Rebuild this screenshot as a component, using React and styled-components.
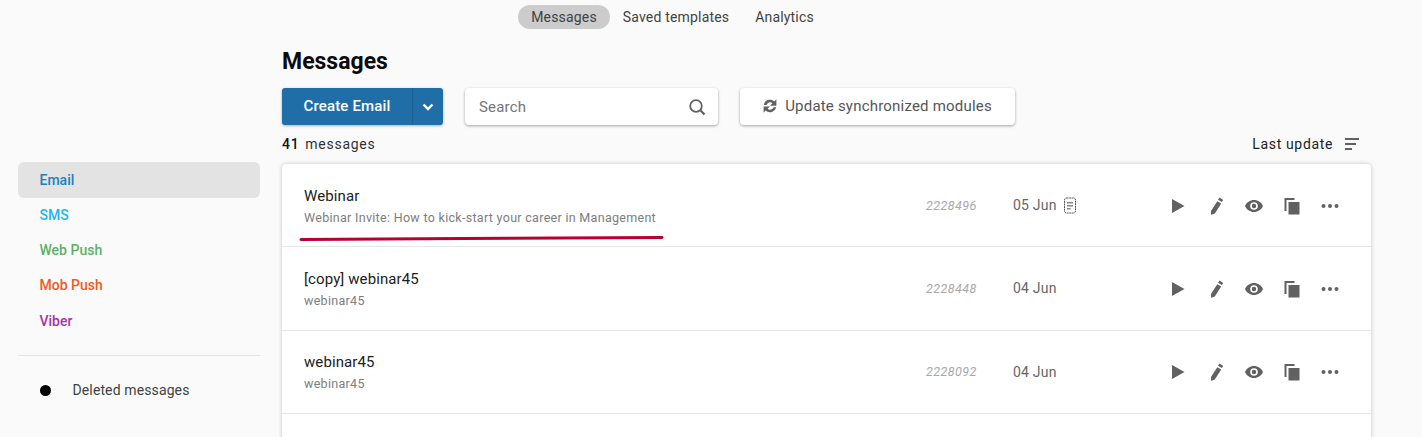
import React from "react";
import styled, { createGlobalStyle } from "styled-components";

const Global = createGlobalStyle`
  html, body { margin: 0; padding: 0; height: 437px; overflow: hidden; background: #fafafa; }
  body { font-family: Roboto, "Liberation Sans", sans-serif; }
`;
const Page = styled.div`
  width: 1422px; height: 437px; overflow: hidden; background: #fafafa;
`;
const Tabs = styled.nav`
  display: flex; justify-content: center; height: 29px; padding: 5px 77px 0 0; box-sizing: border-box;
`;
const Tab = styled.div`
  height: 24px; line-height: 24px; font-size: 14px; letter-spacing: 0.18px; color: #424242;
  padding: 0 13px; border-radius: 12px; background: ${p => (p.$active ? "#cccccc" : "transparent")};
`;
const Body = styled.div`
  display: flex; padding-left: 18px;
`;
const Sidebar = styled.aside`
  width: 242px; flex: none; padding-top: 133px; margin-right: 22px;
`;
const SideItem = styled.div`
  height: 36px; line-height: 36px; margin-bottom: -0.85px; padding-left: 21.5px; border-radius: 6px; font-size: 14px; font-weight: 500;
  color: ${p => p.$color}; background: ${p => (p.$active ? "#e3e3e3" : "transparent")};
`;
const SideDivider = styled.div`
  height: 1px; background: #e4e4e4; margin-top: 17.5px;
`;
const Deleted = styled.div`
  display: flex; align-items: center; height: 68px; padding-left: 21.5px; font-size: 14px; letter-spacing: 0.12px; color: #424242;
`;
const Dot = styled.span`
  width: 11px; height: 11px; border-radius: 50%; background: #000; margin-right: 22px; flex: none;
`;
const Main = styled.main`
  width: 1089px; flex: none; position: relative;
`;
const Title = styled.h1`
  margin: 0; padding-top: 18px; height: 59px; box-sizing: border-box; font-size: 23px; line-height: 29px; font-weight: 700; color: #0c0c0c;
`;
const Toolbar = styled.div`
  display: flex; align-items: center; height: 37px;
`;
const SplitButton = styled.div`
  display: flex; height: 37px; width: 161px; border-radius: 3px; background: #1f6ea8; color: #fff;
  box-shadow: 0 1px 3px rgba(0,0,0,.3); margin-right: 22px; overflow: hidden; flex: none;
`;
const MainAction = styled.div`
  width: 130px; flex: none; text-align: center; line-height: 37px; font-size: 15px; letter-spacing: .15px; font-weight: 500; border-right: 1px solid #1a6296;
`;
const Caret = styled.div`
  flex: 1; display: flex; align-items: center; justify-content: center;
`;
const SearchBox = styled.div`
  width: 253px; height: 37px; box-sizing: border-box; flex: none; background: #fff; border-radius: 4px; margin-right: 22px;
  box-shadow: 0 1px 3px rgba(0,0,0,.35); display: flex; align-items: center; justify-content: space-between;
  padding: 0 12px 0 14px; font-size: 15px; letter-spacing: 0.2px; color: #757575;
`;
const SyncButton = styled.div`
  width: 275px; height: 37px; box-sizing: border-box; background: #fff; border-radius: 4px; flex: none;
  box-shadow: 0 1px 3px rgba(0,0,0,.35); display: flex; align-items: center; justify-content: center; gap: 6px;
  padding: 0 2px 2px 0; font-size: 15px; letter-spacing: 0.2px; color: #555;
`;
const Meta = styled.div`
  display: flex; align-items: center; justify-content: space-between; height: 37px; margin-bottom: 2px; padding-right: 12px;
  font-size: 14px; letter-spacing: 0.72px; color: #333;
`;
const Count = styled.div`
  display: flex; gap: 6px;
  & > b { font-weight: 500; color: #111; }
`;
const Sort = styled.div`
  display: flex; align-items: center; gap: 12px; color: #222; letter-spacing: 0.65px;
`;
const Card = styled.section`
  background: #fff; border-radius: 4px 4px 0 0; box-shadow: 0 0 4px rgba(0,0,0,.22); height: 300px;
`;
const Row = styled.article`
  display: flex; align-items: center; height: 83.33px; box-sizing: border-box; border-bottom: 1px solid #e6e6e6;
  padding-left: 22px; position: relative;
`;
const Names = styled.div`
  width: 622px; flex: none; padding-top: 2px;
`;
const Name = styled.div`
  font-size: 15px; line-height: 18px; color: #212121; margin-bottom: 5px; letter-spacing: 0.1px;
`;
const Subject = styled.div`
  font-size: 12.5px; line-height: 16px; color: #7d7d7d; letter-spacing: 0.3px;
`;
const Id = styled.div`
  width: 87px; flex: none; font-size: 12.5px; font-style: italic; color: #a8a8a8; letter-spacing: .45px;
`;
const DateCell = styled.div`
  display: flex; align-items: center; gap: 6px; width: 154px; flex: none; font-size: 14px; letter-spacing: .2px; color: #666;
`;
const Actions = styled.div`
  display: flex; align-items: center; gap: 16px; padding-top: 1px;
`;
const Action = styled.svg`
  width: 22px; height: 22px; flex: none; fill: #616161; display: block;
`;
const Underline = styled.svg`
  position: absolute; left: 16px; top: 66px; width: 370px; height: 10px; overflow: visible;
`;

const rows = [
  { name: "Webinar", subject: "Webinar Invite: How to kick-start your career in Management", id: "2228496", date: "05 Jun", doc: true, mark: true },
  { name: "[copy] webinar45", subject: "webinar45", id: "2228448", date: "04 Jun" },
  { name: "webinar45", subject: "webinar45", id: "2228092", date: "04 Jun" },
];
const side = [
  ["Email", "#1c7fbf", true], ["SMS", "#1bb8f2"], ["Web Push", "#5cb166"], ["Mob Push", "#f4591d"], ["Viber", "#a832a8"],
];

const RowActions = () => (
  <Actions>
    <Action viewBox="0 0 22 22"><path d="M5 4v14l12.500-7z" /></Action>
    <Action viewBox="0 0 22 22"><path d="M14.800 2.800l2.800 1.700c.4.300.5.700.3 1.100l-1 1.500-3.900-2.400 1-1.500c.2-.4.500-.5.800-.4zM12.300 6.200l3.900 2.400-6.400 9.800-3.200 1.300-.6-.4.100-3.500z" /></Action>
    <Action viewBox="0 0 22 22"><path d="M11 5C7 5 3.500 7.500 2 11c1.500 3.500 5 6 9 6s7.500-2.500 9-6c-1.500-3.500-5-6-9-6zm0 9.800a3.800 3.800 0 1 1 0-7.600 3.800 3.800 0 0 1 0 7.600zm0-6a2.200 2.200 0 1 0 0 4.400 2.200 2.200 0 0 0 0-4.400z" /></Action>
    <Action viewBox="0 0 22 22"><path d="M3.500 3h10v2H5.500v11h-2zM7.500 7h11v12.500h-11z" /></Action>
    <Action viewBox="0 0 22 22"><circle cx="4.500" cy="11" r="2" /><circle cx="11" cy="11" r="2" /><circle cx="17.500" cy="11" r="2" /></Action>
  </Actions>
);

export default function App() {
  return (
    <Page>
      <Global />
      <Tabs>
        <Tab $active>Messages</Tab>
        <Tab>Saved templates</Tab>
        <Tab>Analytics</Tab>
      </Tabs>
      <Body>
        <Sidebar>
          {side.map(([label, color, active]) => (
            <SideItem key={label} $color={color} $active={active}>{label}</SideItem>
          ))}
          <SideDivider />
          <Deleted><Dot />Deleted messages</Deleted>
        </Sidebar>
        <Main>
          <Title>Messages</Title>
          <Toolbar>
            <SplitButton>
              <MainAction>Create Email</MainAction>
              <Caret>
                <svg width="12" height="8" viewBox="0 0 12 8"><path d="M1.500 1.500L6 6l4.500-4.500" fill="none" stroke="#fff" strokeWidth="2.400" /></svg>
              </Caret>
            </SplitButton>
            <SearchBox>
              Search
              <svg width="18" height="18" viewBox="0 0 18 18" fill="none" stroke="#616161" strokeWidth="1.800"><circle cx="8" cy="8" r="5.800" /><path d="M12.300 12.300L16.500 16.500" strokeWidth="2.200" /></svg>
            </SearchBox>
            <SyncButton>
              <svg width="18" height="18" viewBox="0 0 24 24" fill="#616161"><path d="M12 3.500c2.200 0 4.300.9 5.800 2.400L20.500 3v8.500H12l3.200-3.200A4.900 4.900 0 0 0 7.300 10.500H3.700A8.600 8.600 0 0 1 12 3.500zM3.500 12.500H12l-3.200 3.200a4.900 4.900 0 0 0 7.900-2.200h3.600A8.600 8.600 0 0 1 6.200 18.100L3.500 21z" /></svg>
              Update synchronized modules
            </SyncButton>
          </Toolbar>
          <Meta>
            <Count><b>41</b> messages</Count>
            <Sort>
              Last update
              <svg width="14" height="12" viewBox="0 0 14 12" fill="#616161"><rect x="0" y="0" width="14" height="2" /><rect x="0" y="5" width="11" height="2" /><rect x="0" y="10" width="7" height="2" /></svg>
            </Sort>
          </Meta>
          <Card>
            {rows.map(r => (
              <Row key={r.id + r.name}>
                <Names>
                  <Name>{r.name}</Name>
                  <Subject>{r.subject}</Subject>
                </Names>
                <Id>{r.id}</Id>
                <DateCell>
                  {r.date}
                  {r.doc && (
                    <svg width="14" height="17" viewBox="0 0 14 17" fill="none"><rect x="1.500" y="1" width="11" height="15" rx="2" stroke="#555" strokeDasharray="2 .6" /><path d="M4 5h6v1.500H4zM4 8h6v1.500H4zM4 11h3.500v1.500H4z" fill="#888" /></svg>
                  )}
                </DateCell>
                <RowActions />
                {r.mark && (
                  <Underline viewBox="0 0 370 10"><path d="M3 9.500C120 8 250 9 364 7.500" fill="none" stroke="#b80035" strokeWidth="3" strokeLinecap="round" /></Underline>
                )}
              </Row>
            ))}
          </Card>
        </Main>
      </Body>
    </Page>
  );
}
